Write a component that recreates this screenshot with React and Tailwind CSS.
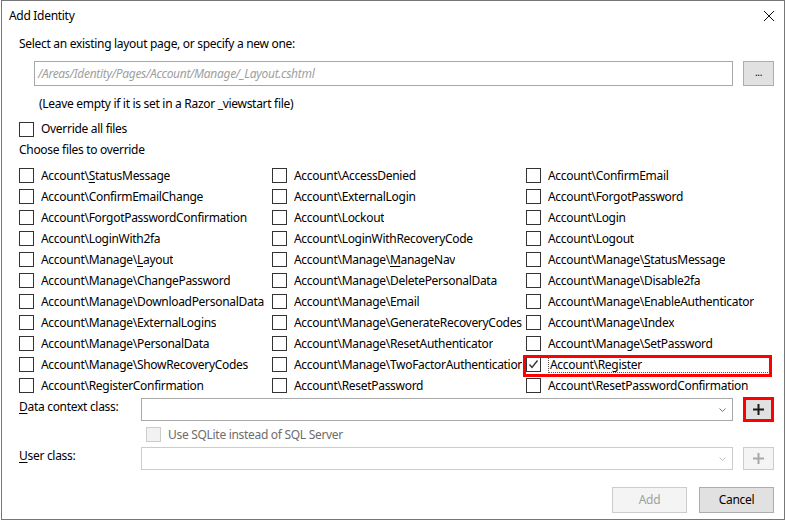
import React from 'react';

const rows = [
    ['Account\\StatusMessage', 'Account\\AccessDenied', 'Account\\ConfirmEmail'],
    ['Account\\ConfirmEmailChange', 'Account\\ExternalLogin', 'Account\\ForgotPassword'],
    ['Account\\ForgotPasswordConfirmation', 'Account\\Lockout', 'Account\\Login'],
    ['Account\\LoginWith2fa', 'Account\\LoginWithRecoveryCode', 'Account\\Logout'],
    ['Account\\Manage\\Layout', 'Account\\Manage\\ManageNav', 'Account\\Manage\\StatusMessage'],
    ['Account\\Manage\\ChangePassword', 'Account\\Manage\\DeletePersonalData', 'Account\\Manage\\Disable2fa'],
    ['Account\\Manage\\DownloadPersonalData', 'Account\\Manage\\Email', 'Account\\Manage\\EnableAuthenticator'],
    ['Account\\Manage\\ExternalLogins', 'Account\\Manage\\GenerateRecoveryCodes', 'Account\\Manage\\Index'],
    ['Account\\Manage\\PersonalData', 'Account\\Manage\\ResetAuthenticator', 'Account\\Manage\\SetPassword'],
    ['Account\\Manage\\ShowRecoveryCodes', 'Account\\Manage\\TwoFactorAuthentication', 'Account\\Register'],
    ['Account\\RegisterConfirmation', 'Account\\ResetPassword', 'Account\\ResetPasswordConfirmation'],
];

// labels with an access key: [prefix, underlined letter, rest]
const accessKeys = {
    'Account\\StatusMessage': ['Account\\', 'S', 'tatusMessage'],
    'Account\\Manage\\Layout': ['Account\\Manage\\', 'L', 'ayout'],
    'Account\\Manage\\ManageNav': ['Account\\Manage\\', 'M', 'anageNav'],
    'Account\\Manage\\StatusMessage': ['Account\\Manage\\', 'S', 'tatusMessage'],
};

function Label({ text }) {
    const k = accessKeys[text];
    if (!k) return text;
    return (<>{k[0]}<u className="underline-offset-2">{k[1]}</u>{k[2]}</>);
}

function Box({ checked = false, disabled = false }) {
    return (
        <span className={`flex h-[15px] w-[15px] shrink-0 items-center justify-center border ${disabled ? 'border-[#cccccc] bg-[#f2f2f2]' : 'border-[#333333] bg-white'}`}>
            {checked && (
                <svg width="11" height="11" viewBox="0 0 11 11">
                    <path d="M1.5 5.5 L4 8.5 L9.5 1.5" fill="none" stroke="#333" strokeWidth="1.4" />
                </svg>
            )}
        </span>
    );
}

function Chevron({ color = '#707070' }) {
    return (
        <svg width="7" height="4" viewBox="0 0 7 4">
            <path d="M0.5 0.5 L3.5 3.5 L6.5 0.5" fill="none" stroke={color} strokeWidth="1" />
        </svg>
    );
}

function Plus({ color }) {
    return (
        <svg width="11" height="11" viewBox="0 0 11 11">
            <path d="M5.5 0 V11 M0 5.5 H11" stroke={color} strokeWidth="2" />
        </svg>
    );
}

export default function App() {
    return (
        <div className="h-[521px] w-[786px] bg-white font-['Noto_Sans',sans-serif] text-[12px] leading-[16px] tracking-[-0.3px] text-black">
            <div className="ml-px flex h-[520px] w-[784px] flex-col border border-[#777777]">
                <div className="flex h-[30px] shrink-0 items-center justify-between pl-[7px] pr-[10px]">
                    <span>Add Identity</span>
                    <svg width="10" height="10" viewBox="0 0 10 10">
                        <path d="M0 0 L10 10 M10 0 L0 10" stroke="#111" strokeWidth="1" />
                    </svg>
                </div>

                <div className="flex flex-col pl-[17px] pr-[10px]">
                    <div className="flex h-[26px] items-center">Select an existing layout page, or specify a new one:</div>
                    <div className="mt-[4px] flex h-[25px] items-stretch pl-[15px]">
                        <div className="flex flex-1 items-center border border-[#a8a8a8] pl-[3px] italic text-[#a0a0a0]">
                            /Areas/Identity/Pages/Account/Manage/_Layout.cshtml
                        </div>
                        <div className="ml-[10px] flex w-[31px] items-center justify-center border border-[#adadad] bg-[#e1e1e1] pb-[3px] text-[10px]">...</div>
                    </div>
                    <div className="flex h-[33px] items-center pl-[20px] pt-[3px]">(Leave empty if it is set in a Razor _viewstart file)</div>
                    <div className="flex h-[20px] items-center gap-[7px]">
                        <Box />
                        <span>Override all files</span>
                    </div>
                    <div className="flex h-[21px] items-center">Choose files to override</div>

                    <div className="mt-[5px] grid grid-cols-[253px_254px_1fr]">
                        {rows.map((row, r) => row.map((text, c) => {
                            const sel = r === 9 && c === 2;
                            return (
                                <div key={r + '-' + c} className="relative flex h-[21px] items-center gap-[7px] pr-[4px]">
                                    <Box checked={sel} />
                                    <span className={`overflow-hidden whitespace-nowrap ${sel ? 'flex h-[17px] flex-1 items-center border border-dotted border-[#555555] pl-px' : ''}`}>
                                        <Label text={text} />
                                    </span>
                                    {sel && <span className="pointer-events-none absolute -left-[3px] top-px right-[2px] h-[22px] border-[3px] border-[#ff0000]" />}
                                </div>
                            );
                        }))}
                    </div>

                    <div className="flex h-[28px] items-start">
                        <span className="w-[122px] pt-[3px]"><u className="underline-offset-2">D</u>ata context class:</span>
                        <div className="mt-[2px] flex h-[23px] flex-1 items-center justify-end border border-[#a8a8a8] pr-[6px]">
                            <Chevron />
                        </div>
                        <div className="ml-[10px] mt-px flex h-[25px] w-[31px] items-center justify-center border-[3px] border-[#ff0000] bg-[#e1e1e1]">
                            <Plus color="#1a1a1a" />
                        </div>
                    </div>
                    <div className="flex h-[21px] items-center gap-[7px] pl-[127px]">
                        <Box disabled />
                        <span className="text-[#6d6d6d]">Use SQLite instead of SQL Server</span>
                    </div>
                    <div className="flex h-[26px] items-start">
                        <span className="w-[122px] pt-[3px]"><u className="underline-offset-2">U</u>ser class:</span>
                        <div className="mt-[2px] flex h-[23px] flex-1 items-center justify-end border border-[#cccccc] pr-[6px]">
                            <Chevron color="#c0c0c0" />
                        </div>
                        <div className="ml-[10px] mt-[2px] flex h-[23px] w-[31px] items-center justify-center border border-[#cccccc] bg-[#f4f4f4]">
                            <Plus color="#a8a8a8" />
                        </div>
                    </div>

                    <div className="mt-[16px] flex justify-end gap-[12px]">
                        <div className="flex h-[26px] w-[75px] items-center justify-center border border-[#cccccc] bg-[#f4f4f4] text-[#a0a0a0]">Add</div>
                        <div className="flex h-[26px] w-[75px] items-center justify-center border border-[#adadad] bg-[#e1e1e1]">Cancel</div>
                    </div>
                </div>
            </div>
        </div>
    );
}
